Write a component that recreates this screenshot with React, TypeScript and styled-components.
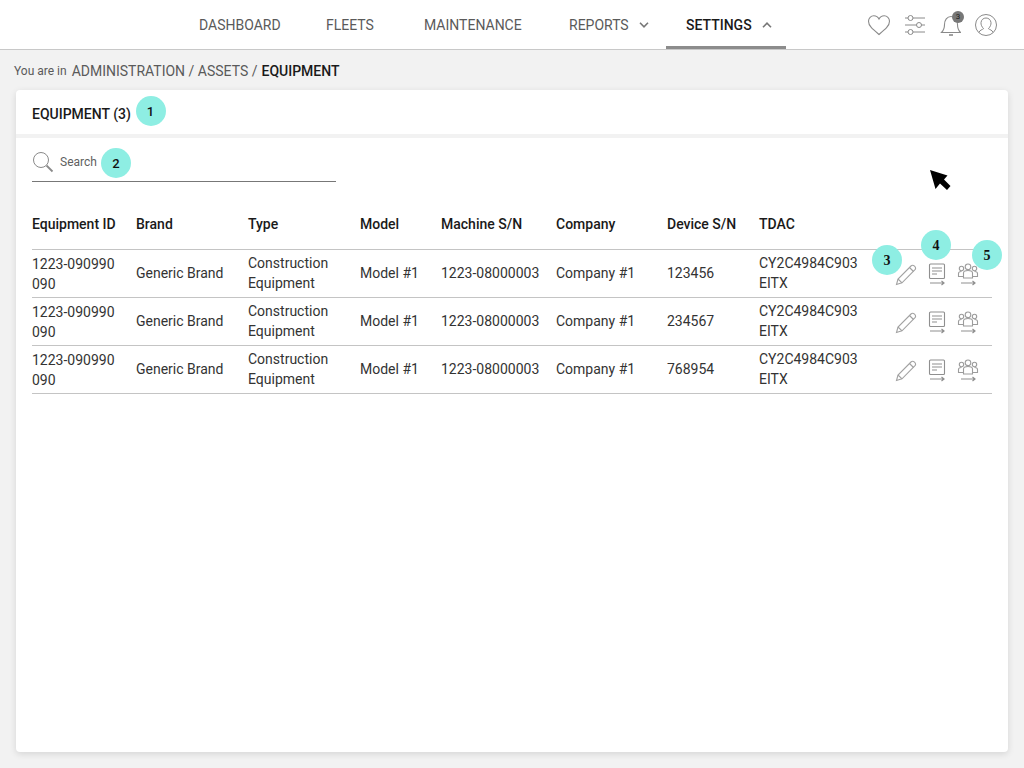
import React from 'react';
import styled, { createGlobalStyle } from 'styled-components';

const GlobalStyle = createGlobalStyle`
  html, body {
    margin: 0;
    padding: 0;
    background: #f2f2f2;
    font-family: Roboto, "Liberation Sans", sans-serif;
    overflow: hidden;
  }
`;

const Page = styled.div`
  position: relative;
  width: 1024px;
  height: 768px;
  display: flex;
  flex-direction: column;
  background: #f2f2f2;
`;

const Header = styled.header`
  height: 49px;
  flex: none;
  display: flex;
  background: #fff;
  border-bottom: 1px solid #c8c8c8;
`;

const Nav = styled.nav`
  display: flex;
  margin-left: 199px;
  width: 587px;
`;

const NavItem = styled.a<{ $width: number; $active?: boolean }>`
  width: ${(p) => p.$width}px;
  margin-left: ${(p) => (p.$active ? '-20px' : '0')};
  padding-left: ${(p) => (p.$active ? '20px' : '0')};
  box-sizing: border-box;
  height: 49px;
  display: flex;
  align-items: center;
  gap: 10px;
  font-size: 14px;
  font-weight: ${(p) => (p.$active ? 500 : 400)};
  color: ${(p) => (p.$active ? '#1a1a1a' : '#5a5a5a')};
  border-bottom: 3px solid ${(p) => (p.$active ? '#8c8c8c' : 'transparent')};
  padding-top: 4px;
`;

const Tools = styled.div`
  display: flex;
  align-items: center;
  gap: 14px;
  margin-left: 81px;
  padding-top: 1px;
`;

const BellWrap = styled.span`
  position: relative;
  display: flex;
`;

const BellCount = styled.span`
  position: absolute;
  top: -2px;
  right: -3px;
  width: 12px;
  height: 12px;
  border-radius: 50%;
  background: #777;
  color: #222;
  font-size: 8px;
  line-height: 12px;
  text-align: center;
`;

const Crumbs = styled.div`
  height: 40px;
  flex: none;
  box-sizing: border-box;
  display: flex;
  align-items: center;
  padding: 2px 0 0 14px;
  font-size: 14px;
  color: #5a5a5a;
`;

const CrumbLabel = styled.span`
  font-size: 12px;
  margin-right: 5px;
`;

const CrumbCurrent = styled.span`
  font-weight: 500;
  color: #1a1a1a;
  margin-left: 4px;
`;

const Card = styled.main`
  width: 992px;
  height: 662px;
  margin-left: 16px;
  background: #fff;
  border-radius: 4px;
  box-shadow: 0 2px 7px rgba(0, 0, 0, 0.12);
`;

const CardTitle = styled.h1`
  margin: 0;
  height: 48px;
  box-sizing: border-box;
  padding: 16px 16px 0;
  border-bottom: 4px solid #f2f2f2;
  font-size: 14px;
  line-height: 16px;
  font-weight: 500;
  color: #1a1a1a;
`;

const Body = styled.div`
  padding: 0 16px;
`;

const SearchBar = styled.div`
  width: 304px;
  height: 44px;
  box-sizing: border-box;
  display: flex;
  align-items: center;
  gap: 6px;
  border-bottom: 1px solid #777;
  font-size: 12px;
  color: #5f5f5f;
  padding-top: 5px;
`;

const Row = styled.div<{ $head?: boolean }>`
  display: grid;
  grid-template-columns: 104px 112px 112px 81px 115px 111px 92px 134px 1fr;
  align-items: center;
  height: ${(p) => (p.$head ? '68px' : '48px')};
  box-sizing: border-box;
  border-bottom: 1px solid #c4c4c4;
  font-size: 14px;
  line-height: 20px;
  color: ${(p) => (p.$head ? '#1a1a1a' : '#333')};
  font-weight: ${(p) => (p.$head ? 500 : 400)};
  padding-top: ${(p) => (p.$head ? '24px' : '0')};
  padding-bottom: ${(p) => (p.$head ? '7px' : '2px')};
`;

const IdCell = styled.span`
  margin-top: 2px;
`;

const TdacCell = styled.span`
  max-width: 105px;
`;

const Actions = styled.div`
  display: flex;
  align-items: center;
  gap: 9px;
  margin-left: 2px;
  padding-top: 4px;
`;

const Marker = styled.span<{ $x: number; $y: number; $serif?: boolean }>`
  position: absolute;
  left: ${(p) => p.$x - 15}px;
  top: ${(p) => p.$y - 15}px;
  width: 30px;
  height: 30px;
  box-sizing: border-box;
  padding-top: ${(p) => (p.$serif ? 2 : 0)}px;
  border-radius: 50%;
  background: #8eeee3;
  color: #111;
  display: flex;
  align-items: center;
  justify-content: center;
  font-size: ${(p) => (p.$serif ? 14 : 13)}px;
  font-weight: ${(p) => (p.$serif ? 700 : 500)};
  font-family: ${(p) => (p.$serif ? '"Liberation Serif", serif' : 'Roboto, sans-serif')};
`;

const Cursor = styled.svg`
  position: absolute;
  left: 930px;
  top: 170px;
`;

const Chevron = ({ up }: { up?: boolean }) => (
  <svg width="10" height="6" viewBox="0 0 10 6" fill="none" stroke="#777" strokeWidth="1.6">
    <path d={up ? 'M1 5.2 L5 1.2 L9 5.2' : 'M1 .8 L5 4.8 L9 .8'} />
  </svg>
);

const Heart = () => (
  <svg width="24" height="22" viewBox="0 0 24 22" fill="none" stroke="#8a8a8a" strokeWidth="1.1">
    <path d="M12 20.5 C6 15.5 1.5 12 1.5 7.2 C1.5 4 4 1.8 6.8 1.8 C9 1.8 11 3 12 5 C13 3 15 1.8 17.2 1.8 C20 1.8 22.5 4 22.5 7.2 C22.5 12 18 15.5 12 20.5 Z" />
  </svg>
);

const Sliders = () => (
  <svg width="20" height="20" viewBox="0 0 20 20" fill="none" stroke="#8a8a8a" strokeWidth="1">
    <path d="M0 3 H3 M8 3 H20 M0 10 H11.5 M16.5 10 H20 M0 17 H3 M8 17 H20" />
    <circle cx="5.5" cy="3" r="2.5" />
    <circle cx="14" cy="10" r="2.5" />
    <circle cx="5.5" cy="17" r="2.5" />
  </svg>
);

const Bell = () => (
  <svg width="22" height="24" viewBox="-1 0 22 24" fill="none" stroke="#8a8a8a" strokeWidth="1.1">
    <path d="M1.5 19.5 C3.5 17.5 4.5 15.5 4.5 11.5 C4.5 7 7 3.5 11 3.5 C15 3.5 17.5 7 17.5 11.5 C17.5 15.5 18.5 17.5 20.5 19.5 Z" />
    <path d="M9 22 H13" strokeWidth="1.6" />
  </svg>
);

const Profile = () => (
  <svg width="22" height="22" viewBox="0 0 22 22" fill="none" stroke="#8a8a8a" strokeWidth="1">
    <circle cx="11" cy="11" r="10.5" />
    <path d="M4 18.5 C4.5 16 7.5 15.8 8.6 14.6 C6.8 13 5.8 10.5 6 8.6 C6.3 5.6 8.5 4 11 4 C13.5 4 15.7 5.6 16 8.6 C16.2 10.5 15.2 13 13.4 14.6 C14.5 15.8 17.5 16 18 18.5" />
  </svg>
);

const SearchIcon = () => (
  <svg width="22" height="22" viewBox="0 0 22 22" fill="none" stroke="#8a8a8a">
    <circle cx="9" cy="9" r="7.5" strokeWidth="1" />
    <path d="M14.5 14.5 L20.5 20.5" strokeWidth="1.8" />
  </svg>
);

const Pencil = () => (
  <svg width="22" height="22" viewBox="0 0 22 22" fill="none" stroke="#a2a2a2" strokeWidth="1.1">
    <path d="M1.5 20.5 L3 15 L16 2 C17 1 18.2 1 19.5 2.2 C20.8 3.5 20.8 4.7 20 5.6 L7 18.8 Z" />
    <path d="M3 15 L7 18.8 M14.5 3.5 L18.5 7.5" />
  </svg>
);

const ListIcon = () => (
  <svg width="22" height="24" viewBox="0 0 22 24" fill="none" stroke="#8f8f8f" strokeWidth="1.1">
    <rect x="3.5" y="1" width="15" height="14.5" rx="1" />
    <path d="M6 5 H16 M6 8 H16 M6 11 H11" />
    <path d="M4 20 H18 M15.5 18 L18 20 L15.5 22" strokeWidth="1.2" />
  </svg>
);

const GroupIcon = () => (
  <svg width="22" height="24" viewBox="0 0 22 24" fill="none" stroke="#9c9c9c" strokeWidth="1.1">
    <circle cx="11" cy="3.8" r="2.8" />
    <circle cx="4.5" cy="5.5" r="2.2" />
    <circle cx="17.5" cy="5.5" r="2.2" />
    <path d="M6.5 15 V10 C6.5 8.5 8 7.5 11 7.5 C14 7.5 15.5 8.5 15.5 10 V15 Z" />
    <path d="M6.5 13.5 H1.5 V10.5 C1.5 9 2.5 8.5 4.5 8.5 M15.5 13.5 H20.5 V10.5 C20.5 9 19.5 8.5 17.5 8.5" />
    <path d="M4 20 H18 M15.5 18 L18 20 L15.5 22" stroke="#8f8f8f" strokeWidth="1.2" />
  </svg>
);

const equipment = [
  { device: '123456' },
  { device: '234567' },
  { device: '768954' },
];

const columns = ['Equipment ID', 'Brand', 'Type', 'Model', 'Machine S/N', 'Company', 'Device S/N', 'TDAC'];

export default function App() {
  return (
    <Page>
      <GlobalStyle />
      <Header>
        <Nav>
          <NavItem $width={127}>DASHBOARD</NavItem>
          <NavItem $width={98}>FLEETS</NavItem>
          <NavItem $width={145}>MAINTENANCE</NavItem>
          <NavItem $width={117}>
            REPORTS <Chevron />
          </NavItem>
          <NavItem $width={120} $active>
            SETTINGS <Chevron up />
          </NavItem>
        </Nav>
        <Tools>
          <Heart />
          <Sliders />
          <BellWrap>
            <Bell />
            <BellCount>3</BellCount>
          </BellWrap>
          <Profile />
        </Tools>
      </Header>

      <Crumbs>
        <CrumbLabel>You are in</CrumbLabel>
        ADMINISTRATION / ASSETS /<CrumbCurrent>EQUIPMENT</CrumbCurrent>
      </Crumbs>

      <Card>
        <CardTitle>EQUIPMENT (3)</CardTitle>
        <Body>
          <SearchBar>
            <SearchIcon />
            Search
          </SearchBar>
          <Row $head>
            {columns.map((c) => (
              <span key={c}>{c}</span>
            ))}
          </Row>
          {equipment.map((item) => (
            <Row key={item.device}>
              <IdCell>1223-090990 090</IdCell>
              <span>Generic Brand</span>
              <span>Construction Equipment</span>
              <span>Model #1</span>
              <span>1223-08000003</span>
              <span>Company #1</span>
              <span>{item.device}</span>
              <TdacCell>CY2C4984C903 EITX</TdacCell>
              <Actions>
                <Pencil />
                <ListIcon />
                <GroupIcon />
              </Actions>
            </Row>
          ))}
        </Body>
      </Card>

      <Marker $x={150.5} $y={111}>1</Marker>
      <Marker $x={116} $y={163}>2</Marker>
      <Marker $x={887} $y={260} $serif>3</Marker>
      <Marker $x={936} $y={244.5} $serif>4</Marker>
      <Marker $x={987} $y={255} $serif>5</Marker>

      <Cursor width="21" height="21" viewBox="0 0 21 21">
        <path d="M0 0 L17.5 5.5 L14 9.5 L20.5 16 L17 20 L10 13.5 L5.5 19 Z" fill="#000" />
      </Cursor>
    </Page>
  );
}
